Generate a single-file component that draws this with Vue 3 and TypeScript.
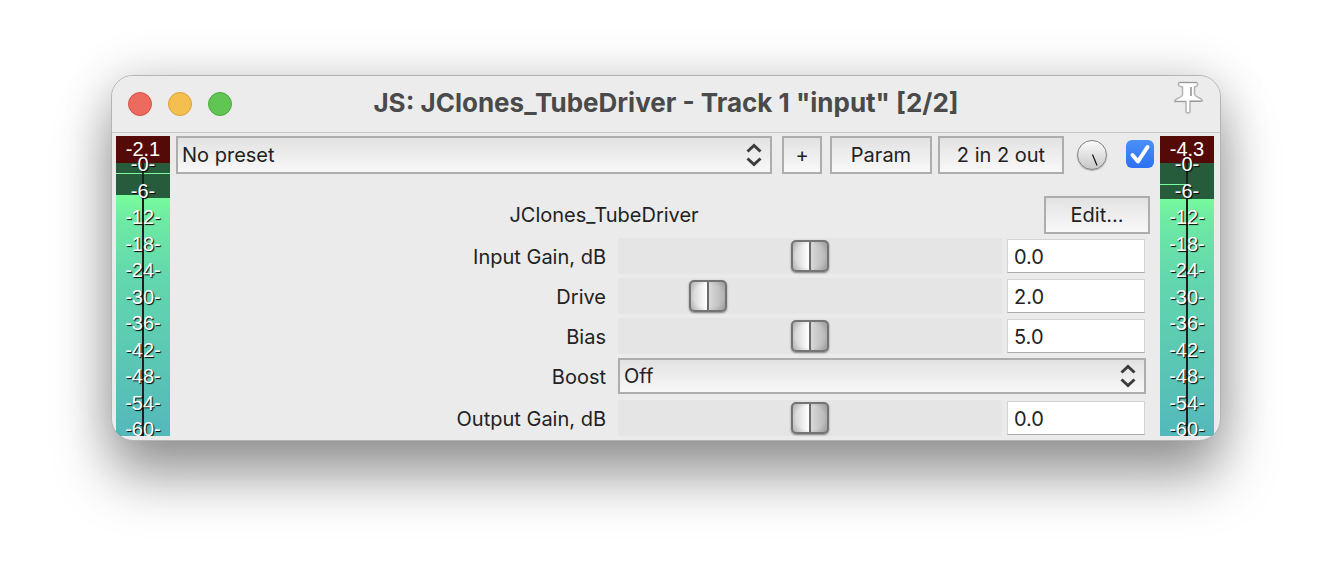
<script setup lang="ts">
import { ref } from 'vue'

interface Meter {
  id: string
  peak: string
  levels: [number, number]
  hold: { y: number; width: number }
}

interface Param {
  id: string
  label: string
  min: number
  max: number
  value: number
}

const meters: Record<'left' | 'right', Meter> = {
  left: { id: 'in', peak: '-2.1', levels: [59, 62], hold: { y: 37, width: 54 } },
  right: { id: 'out', peak: '-4.3', levels: [63, 63], hold: { y: 48, width: 27 } },
}

const marks = Array.from({ length: 11 }, (_, i) => i * 6)
const markY = (db: number) => Math.round(35 + (db / 60) * 265)

const gains = ref<Param[]>([
  { id: 'input-gain', label: 'Input Gain, dB', min: -24, max: 24, value: 0 },
  { id: 'drive', label: 'Drive', min: 0, max: 10, value: 2 },
  { id: 'bias', label: 'Bias', min: 0, max: 10, value: 5 },
])
const outputs = ref<Param[]>([
  { id: 'output-gain', label: 'Output Gain, dB', min: -24, max: 24, value: 0 },
])

const preset = ref('No preset')
const boost = ref('Off')
const enabled = ref(true)

function setValue(param: Param, event: Event) {
  const next = parseFloat((event.target as HTMLInputElement).value)
  if (!Number.isNaN(next)) param.value = Math.min(param.max, Math.max(param.min, next))
}
</script>

<template>
  <main class="desktop">
    <section class="window">
      <header class="titlebar">
        <div class="lights">
          <button class="light close" aria-label="Close"></button>
          <button class="light minimise" aria-label="Minimise"></button>
          <button class="light zoom" aria-label="Zoom"></button>
        </div>
        <h1 class="title">JS: JClones_TubeDriver - Track 1 "input" [2/2]</h1>
        <button class="pin" aria-label="Keep on top">
          <svg width="32" height="36" viewBox="0 0 32 36">
            <path
              d="M6.500 3.500q0-1 1-1h17q1 0 1 1v1.500q0 1-1.500 1.500l-1.500.500v7.500q1 2 5 3.500 2.500 1 3 3H18v10q0 2-2 2t-2-2V21.500H2.500q.500-2 3-3 4-1.500 5-3.500V7l-2-.500q-2-.500-2-1.500z"
              fill="#fff" stroke="#b2b2b2" stroke-width="1.500" stroke-linejoin="round"
            />
            <path d="M7.500 2.500h17M3 21.500h11M18 21.500h11" stroke="#989898" stroke-width="1" />
            <path d="M19 7v9" stroke="#aaa" stroke-width="2" />
          </svg>
        </button>
      </header>

      <div class="body">
        <template v-for="(meter, side) in meters" :key="side">
          <svg class="meter" :class="side" width="54" height="300" viewBox="0 0 54 300" role="img" :aria-label="`Level ${meter.peak} dB`">
            <defs>
              <linearGradient :id="`level-${meter.id}`" gradientUnits="userSpaceOnUse" x1="0" y1="60" x2="0" y2="300">
                <stop offset="0" stop-color="#78fc9c" />
                <stop offset="0.1" stop-color="#6eeaa4" />
                <stop offset="0.35" stop-color="#62d6ae" />
                <stop offset="0.65" stop-color="#5bc9b3" />
                <stop offset="1" stop-color="#54b8bb" />
              </linearGradient>
            </defs>
            <rect width="54" height="300" fill="#265c3c" />
            <rect width="54" height="27" fill="#540b07" />
            <rect :y="meter.levels[0]" width="27" height="300" :fill="`url(#level-${meter.id})`" />
            <rect x="27" :y="meter.levels[1]" width="27" height="300" :fill="`url(#level-${meter.id})`" />
            <rect :y="meter.hold.y" :width="meter.hold.width" height="1" fill="#78fc9c" />
            <rect x="26" y="27" width="2" height="273" fill="#1c1f1d" />
            <text class="peak" x="27" y="20">{{ meter.peak }}</text>
            <text v-for="db in marks" :key="db" class="mark" x="27" :y="markY(db)">-{{ db }}-</text>
          </svg>
        </template>

        <div class="panel">
          <div class="toolbar">
            <span class="picker">
              <select v-model="preset" class="select tall" aria-label="Preset">
                <option>No preset</option>
              </select>
              <svg class="arrows" width="16" height="24" viewBox="0 0 16 24"><path d="M1.500 8.500L8 2.500l6.500 6M1.500 15.500l6.500 6 6.500-6" /></svg>
            </span>
            <button class="button plus">+</button>
            <button class="button param">Param</button>
            <button class="button routing">2 in 2 out</button>
            <button class="knob" aria-label="Wet/dry mix">
              <svg width="30" height="30" viewBox="0 0 30 30"><path d="M15.500 14.500l4.500 11" stroke="#111" stroke-width="1.200" /></svg>
            </button>
            <label class="enable">
              <input v-model="enabled" type="checkbox" aria-label="Enable effect" />
              <svg v-if="enabled" width="28" height="28" viewBox="0 0 28 28"><path d="M6.500 15l5.500 6.500L21.500 7" /></svg>
            </label>
          </div>

          <div class="heading">
            <h2 class="name">JClones_TubeDriver</h2>
            <button class="button edit">Edit...</button>
          </div>

          <div class="params">
            <div v-for="p in gains" :key="p.id" class="row">
              <label :for="p.id" class="label">{{ p.label }}</label>
              <input :id="p.id" v-model.number="p.value" class="slider" type="range" :min="p.min" :max="p.max" step="0.1" />
              <input class="value" type="text" :aria-label="`${p.label} value`" :value="p.value.toFixed(1)" @change="setValue(p, $event)" />
            </div>
            <div class="row">
              <label for="boost" class="label">Boost</label>
              <span class="picker wide">
                <select id="boost" v-model="boost" class="select">
                  <option>Off</option>
                  <option>On</option>
                </select>
                <svg class="arrows" width="16" height="24" viewBox="0 0 16 24"><path d="M1.500 8.500L8 2.500l6.500 6M1.500 15.500l6.500 6 6.500-6" /></svg>
              </span>
            </div>
            <div v-for="p in outputs" :key="p.id" class="row last">
              <label :for="p.id" class="label">{{ p.label }}</label>
              <input :id="p.id" v-model.number="p.value" class="slider" type="range" :min="p.min" :max="p.max" step="0.1" />
              <input class="value" type="text" :aria-label="`${p.label} value`" :value="p.value.toFixed(1)" @change="setValue(p, $event)" />
            </div>
          </div>
        </div>
      </div>
    </section>
  </main>
</template>

<style>
body {
  margin: 0;
  background: #fff;
}
</style>

<style scoped>
.desktop {
  padding: 75px 111px 147px;
  overflow: hidden;
  font-family: Inter, "Liberation Sans", sans-serif;
  font-size: 20px;
  line-height: 24px;
  color: #222;
}

.desktop * {
  box-sizing: border-box;
}

button,
input,
select {
  margin: 0;
  font: inherit;
  color: inherit;
}

.window {
  overflow: hidden;
  background: #ebebeb;
  border: 1px solid #b4b4b4;
  border-radius: 22px;
  box-shadow: 0 36px 56px rgba(0, 0, 0, 0.38), 0 0 50px rgba(0, 0, 0, 0.16);
}

.titlebar {
  display: grid;
  grid-template-columns: 1fr auto 1fr;
  align-items: center;
  height: 57px;
  padding: 0 16px;
  background: #ececec;
  border-bottom: 1px solid #c6c6c6;
}

.lights {
  display: flex;
  gap: 16px;
}

.light {
  width: 24px;
  height: 24px;
  padding: 0;
  border: 1px solid;
  border-radius: 50%;
}

.close {
  background: #ec6a5e;
  border-color: #d35448;
}

.minimise {
  background: #f5bf4f;
  border-color: #d9a23a;
}

.zoom {
  background: #61c554;
  border-color: #4cab3d;
}

.title {
  margin: 0;
  padding-bottom: 2px;
  font-size: 26px;
  font-weight: 700;
  line-height: 32px;
  color: #4a4a4a;
  white-space: nowrap;
}

.pin {
  justify-self: end;
  align-self: start;
  height: 36px;
  margin-top: 4px;
  padding: 0;
  background: none;
  border: 0;
}

.pin svg {
  display: block;
}

.body {
  display: flex;
  gap: 6px;
  padding: 3px 6px 4px 4px;
}

.meter {
  flex: none;
  font-family: "Liberation Sans", Arial, sans-serif;
  font-size: 20px;
  text-anchor: middle;
}

.meter.right {
  order: 2;
}

.peak {
  fill: #fff;
}

.mark {
  fill: #fff;
  text-shadow: 1px 1px 1px #000;
}

.panel {
  flex: 1;
  order: 1;
  min-width: 0;
}

.toolbar {
  display: flex;
  align-items: center;
}

.picker {
  position: relative;
  flex: 1;
  min-width: 0;
}

.select {
  display: block;
  width: 100%;
  height: 36px;
  padding: 0 32px 0 4px;
  appearance: none;
  background: linear-gradient(#e2e2e2, #f8f8f8);
  border: 2px solid #adadad;
  border-radius: 0;
}

.tall {
  height: 38px;
}

.arrows {
  position: absolute;
  top: 50%;
  right: 10px;
  margin-top: -12px;
  pointer-events: none;
}

.arrows path {
  fill: none;
  stroke: #3c3c3c;
  stroke-width: 3;
}

.button {
  height: 38px;
  padding: 0;
  white-space: nowrap;
  background: linear-gradient(#e2e2e2, #f9f9f9);
  border: 2px solid #adadad;
}

.plus {
  width: 40px;
  margin-left: 10px;
}

.param {
  width: 102px;
  margin-left: 8px;
}

.routing {
  width: 126px;
  margin-left: 6px;
}

.knob {
  width: 30px;
  height: 30px;
  margin-left: 13px;
  padding: 0;
  background: linear-gradient(#fbfbfb, #c8c8c8);
  border: 1px solid #808080;
  border-radius: 50%;
  box-shadow: 0 1px 1px rgba(0, 0, 0, 0.25);
}

.knob svg {
  display: block;
  margin: -1px;
}

.enable {
  display: grid;
  margin: -2px 0 0 19px;
}

.enable input,
.enable svg {
  grid-area: 1 / 1;
}

.enable input {
  width: 28px;
  height: 28px;
  appearance: none;
  background: #fff;
  border: 1px solid #b8b8b8;
  border-radius: 6px;
}

.enable input:checked {
  background: linear-gradient(#4a90f8, #2d70f4);
  border: 0;
}

.enable path {
  fill: none;
  stroke: #fff;
  stroke-width: 4;
  stroke-linecap: round;
  stroke-linejoin: round;
}

.heading {
  display: flex;
  align-items: center;
  gap: 12px;
  margin: 22px 4px 4px 0;
}

.name {
  flex: 1;
  margin: 0;
  font-size: 20px;
  font-weight: 400;
  text-align: center;
}

.edit {
  width: 106px;
}

.params {
  display: grid;
  gap: 4px;
  padding-right: 8px;
}

.row {
  display: grid;
  grid-template-columns: 442fr 384fr 144px;
  align-items: center;
  height: 36px;
}

.last {
  margin-top: 2px;
}

.label {
  padding: 2px 12px 0 0;
  text-align: right;
}

.wide {
  grid-column: 2 / 4;
}

.slider {
  width: 100%;
  height: 36px;
  padding: 0 3px;
  appearance: none;
  background: #e5e5e5;
}

.slider::-webkit-slider-thumb {
  width: 38px;
  height: 32px;
  appearance: none;
  background:
    linear-gradient(#6b6b6b, #6b6b6b) center / 2px 100% no-repeat,
    radial-gradient(ellipse at 50% 50%, transparent 60%, rgba(90, 90, 90, 0.3)),
    linear-gradient(90deg, #d0d0d0, #fff 46%, #d8d8d8 54%, #b4b4b4);
  border: 2px solid #747474;
  border-radius: 5px;
  box-shadow: 0 1px 2px rgba(0, 0, 0, 0.45);
}

.value {
  width: 138px;
  height: 34px;
  margin-left: 5px;
  padding: 2px 6px 0;
  background: #fff;
  border: 1px solid #d4d4d4;
  border-bottom-color: #adadad;
}
</style>
